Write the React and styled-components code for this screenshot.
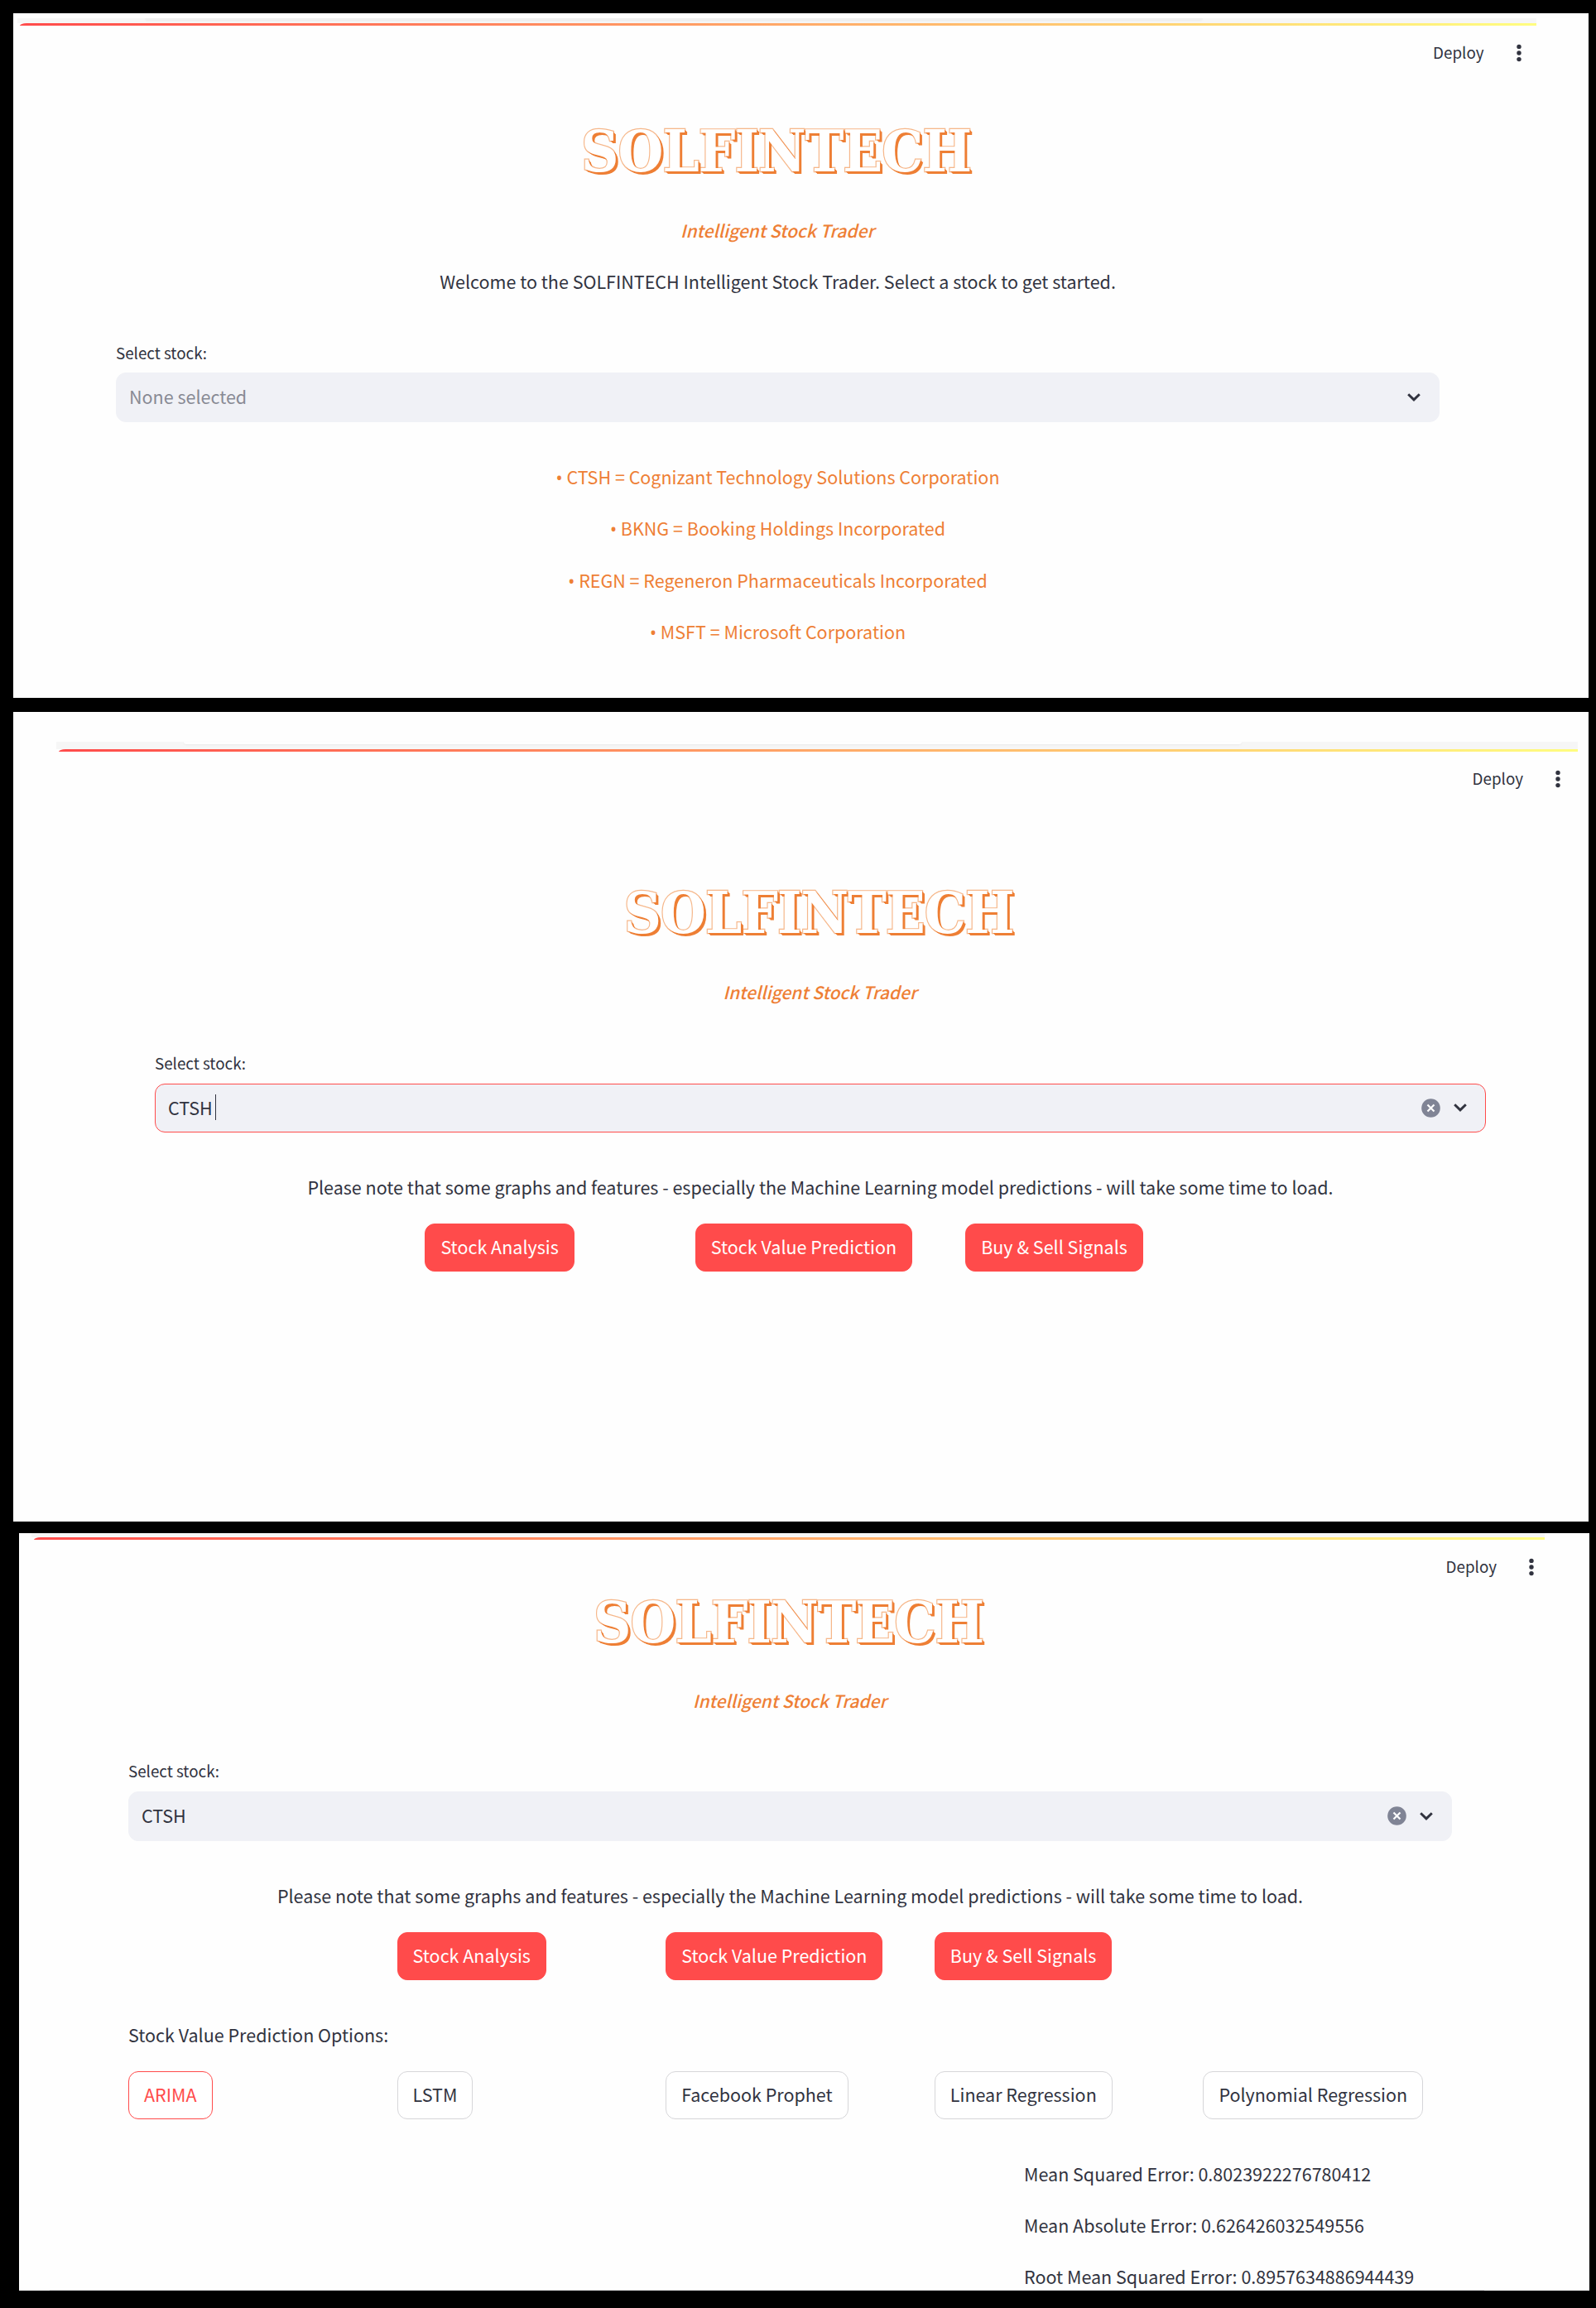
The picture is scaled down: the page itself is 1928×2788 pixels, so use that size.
import React from "react";
import styled, { createGlobalStyle, css } from "styled-components";

const GlobalStyle = createGlobalStyle`
  *, *::before, *::after { box-sizing: border-box; }
  body {
    margin: 0;
    background: #000;
    color: #31333f;
    font-family: "Noto Sans CJK SC", "Open Sans", sans-serif;
    font-size: 21.5px;
  }
`;

const Page = styled.main`
  width: 1928px;
  height: 2788px;
  padding-top: 16px;
  background: #000;
  overflow: hidden;
`;

const Panel = styled.section`
  display: flex;
  flex-direction: column;
  width: ${(p) => p.$width}px;
  height: ${(p) => p.$height}px;
  margin: 0 0 ${(p) => p.$after}px ${(p) => p.$left}px;
  background: #fefefe;
  overflow: hidden;
`;

const BrowserEdge = styled.div`
  display: flex;
  flex: none;
  flex-direction: column;
  width: ${(p) => p.$width}px;
  margin: ${(p) => p.$top}px 0 0 ${(p) => p.$left}px;
`;

const EdgeShade = styled.div`
  height: ${(p) => p.$height}px;
  background: #f6f6f6;
  display: flex;
`;

const AddressBar = styled.div`
  width: ${(p) => p.$width}px;
  height: ${(p) => p.$height}px;
  margin-left: 154px;
  background: ${(p) => p.$color};
  border-radius: 0 0 10px 10px;
  box-shadow: 0 1px 2px #ebebeb;
`;

const Decoration = styled.div`
  height: 3px;
  margin-left: 3px;
  border-top-left-radius: 8px 3px;
  background: linear-gradient(90deg, #ff4b4b, #ffa868 50%, #fffd80);
`;

const Header = styled.header`
  display: flex;
  flex: none;
  align-items: center;
  justify-content: flex-end;
  gap: 39px;
  height: 66px;
  padding-right: ${(p) => p.$right}px;
`;

const Deploy = styled.span`
  padding-bottom: 2px;
  font-size: 18.8px;
  line-height: 24px;
`;

const Content = styled.div`
  display: flex;
  flex: none;
  flex-direction: column;
  width: ${(p) => p.$width}px;
  margin: ${(p) => p.$top}px 0 0 ${(p) => p.$left}px;
`;

const Title = styled.h1`
  margin: 0 4px 0 0;
  text-align: center;
  font: 700 70px/81px "DejaVu Serif Condensed", "DejaVu Serif", serif;
  letter-spacing: -1px;
  color: #fff;
  -webkit-text-stroke: 2.4px #f6b78a;
  paint-order: stroke fill;
  text-shadow: 1px 1px 0 #ee7f35, 2px 2px 0 #ee7f35, 3px 3px 0 #ee7f35;
`;

const Line = styled.p`
  margin: ${(p) => p.$top || 0}px 0 0;
  line-height: 32px;
  white-space: nowrap;
  text-align: ${(p) => p.$align || "center"};
`;

const Subtitle = styled(Line)`
  padding-right: 1px;
  color: #ee7f35;
  font-size: 21px;
  font-style: italic;
  font-weight: 500;
`;

const Label = styled.label`
  margin-top: ${(p) => p.$top}px;
  font-size: 18.8px;
  line-height: 24px;
`;

const SelectBox = styled.div`
  display: flex;
  align-items: center;
  height: ${(p) => p.$height || 60}px;
  margin-top: ${(p) => p.$top}px;
  padding: 0 22px 0 15px;
  border: 1.5px solid ${(p) => (p.$focused ? "#ff4b4b" : "#f0f1f6")};
  border-radius: 12px;
  background: #f0f1f6;
  svg { flex: none; }
`;

const Value = styled.span`
  flex: 1;
  display: flex;
  align-items: center;
  padding-bottom: 1px;
  line-height: 32px;
  color: ${(p) => (p.$placeholder ? "#888a94" : "#31333f")};
`;

const Caret = styled.i`
  width: 1px;
  height: 31px;
  margin-left: 3px;
  background: #31333f;
`;

const TickerList = styled.ul`
  display: flex;
  flex-direction: column;
  gap: 30.5px;
  margin: 49.6px 0 0;
  padding: 0;
  list-style: none;
`;

const Ticker = styled.li`
  line-height: 32px;
  text-align: center;
  color: #ee7f35;
`;

const Bullet = styled.span`
  font-family: "Noto Sans", sans-serif;
  line-height: 1;
`;

const ButtonGrid = styled.div`
  display: grid;
  grid-template-columns: repeat(5, minmax(0, 1fr));
  column-gap: 24px;
  justify-items: start;
  margin-top: ${(p) => p.$top}px;
`;

const Button = styled.button`
  height: 58px;
  padding: 0 18px 2px;
  border: 1px solid #d6d6d9;
  border-radius: 12px;
  background: #fff;
  color: #31333f;
  font: inherit;
  line-height: 32px;
  white-space: nowrap;
  ${(p) => p.$column && css`grid-column: ${p.$column};`}
  ${(p) => p.$primary && css`
    border-color: #ff4b4b;
    background: #ff4b4b;
    color: #fff;
  `}
  ${(p) => p.$active && css`
    border-color: #ff4b4b;
    color: #ff4b4b;
  `}
`;

const Metrics = styled.div`
  display: flex;
  flex-direction: column;
  gap: 30px;
  margin-top: 50px;
  padding-left: 1082px;
`;

const BottomEdge = styled.div`
  flex: none;
  width: 1733px;
  height: 1px;
  margin: auto 0 0 37px;
  background: #dcdcde;
`;

const Dots = () => (
  <svg width="6" height="22" viewBox="0 0 6 22" fill="#31333f">
    <circle cx="3" cy="3.4" r="2.7" />
    <circle cx="3" cy="11" r="2.7" />
    <circle cx="3" cy="18.6" r="2.7" />
  </svg>
);

const Chevron = () => (
  <svg width="16" height="10" viewBox="0 0 16 10" fill="none" stroke="#31333f" strokeWidth="2.9">
    <path d="M1.2 1.2 8 7.9l6.8-6.7" />
  </svg>
);

const Clear = styled.svg`
  margin-right: 16px;
`;

const ClearIcon = () => (
  <Clear width="23" height="23" viewBox="0 0 23 23">
    <circle cx="11.5" cy="11.5" r="11.3" fill="#808495" />
    <path d="m7.5 7.5 8 8m0-8-8 8" stroke="#fff" strokeWidth="2.2" />
  </Clear>
);

const AppHeader = ({ right }) => (
  <Header $right={right}>
    <Deploy>Deploy</Deploy>
    <Dots />
  </Header>
);

const Branding = ({ gap }) => (
  <>
    <Title>SOLFINTECH</Title>
    <Subtitle $top={gap}>Intelligent Stock Trader</Subtitle>
  </>
);

const NOTE =
  "Please note that some graphs and features - especially the Machine Learning model predictions - will take some time to load.";

const TICKERS = [
  "CTSH = Cognizant Technology Solutions Corporation",
  "BKNG = Booking Holdings Incorporated",
  "REGN = Regeneron Pharmaceuticals Incorporated",
  "MSFT = Microsoft Corporation",
];

const MODELS = ["ARIMA", "LSTM", "Facebook Prophet", "Linear Regression", "Polynomial Regression"];

const Actions = ({ top }) => (
  <ButtonGrid $top={top}>
    <Button $primary $column={2}>Stock Analysis</Button>
    <Button $primary $column={3}>Stock Value Prediction</Button>
    <Button $primary $column={4}>Buy &amp; Sell Signals</Button>
  </ButtonGrid>
);

export default function App() {
  return (
    <Page>
      <GlobalStyle />

      <Panel $left={16} $width={1903} $height={827} $after={17}>
        <BrowserEdge $left={5} $top={6} $width={1835}>
          <EdgeShade $height={6}>
            <AddressBar $width={1278} $height={2} $color="#f0f0f0" />
          </EdgeShade>
          <Decoration />
        </BrowserEdge>
        <AppHeader right={81.5} />
        <Content $left={124} $top={45.4} $width={1599}>
          <Branding gap={38.2} />
          <Line $top={30}>
            Welcome to the SOLFINTECH Intelligent Stock Trader. Select a stock to get started.
          </Line>
          <Label $top={58.2}>Select stock:</Label>
          <SelectBox $top={12.2}>
            <Value $placeholder>None selected</Value>
            <Chevron />
          </SelectBox>
          <TickerList>
            {TICKERS.map((t) => (
              <Ticker key={t}><Bullet>•</Bullet> {t}</Ticker>
            ))}
          </TickerList>
        </Content>
      </Panel>

      <Panel $left={16} $width={1903} $height={978} $after={14}>
        <BrowserEdge $left={52} $top={36} $width={1838}>
          <EdgeShade $height={9}>
            <AddressBar $width={1278} $height={3} $color="#fefefe" />
          </EdgeShade>
          <Decoration />
        </BrowserEdge>
        <AppHeader right={34} />
        <Content $left={171} $top={88.4} $width={1608}>
          <Branding gap={38.2} />
          <Label $top={58.2}>Select stock:</Label>
          <SelectBox $focused $top={13.2} $height={59}>
            <Value>CTSH<Caret /></Value>
            <ClearIcon />
            <Chevron />
          </SelectBox>
          <Line $top={49.6}>{NOTE}</Line>
          <Actions top={28.6} />
        </Content>
      </Panel>

      <Panel $left={23} $width={1897} $height={915} $after={0}>
        <BrowserEdge $left={15} $top={0} $width={1828}>
          <EdgeShade $height={5} />
          <Decoration />
        </BrowserEdge>
        <AppHeader right={67} />
        <Content $left={132} $top={-7} $width={1599}>
          <Branding gap={37.6} />
          <Label $top={57.2}>Select stock:</Label>
          <SelectBox $top={13.2}>
            <Value>CTSH</Value>
            <ClearIcon />
            <Chevron />
          </SelectBox>
          <Line $top={49.8}>{NOTE}</Line>
          <Actions top={28.2} />
          <Line $top={49.8} $align="left">Stock Value Prediction Options:</Line>
          <ButtonGrid $top={28.4}>
            {MODELS.map((m) => (
              <Button key={m} $active={m === "ARIMA"}>{m}</Button>
            ))}
          </ButtonGrid>
          <Metrics>
            <Line $align="left">Mean Squared Error: 0.8023922276780412</Line>
            <Line $align="left">Mean Absolute Error: 0.626426032549556</Line>
            <Line $align="left">Root Mean Squared Error: 0.8957634886944439</Line>
          </Metrics>
        </Content>
        <BottomEdge />
      </Panel>
    </Page>
  );
}
